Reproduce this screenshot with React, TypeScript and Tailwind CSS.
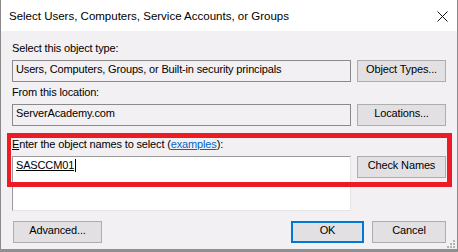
import React from "react";

function Btn({ label, className = "" }: { label: React.ReactNode; className?: string }) {
  return (
    <div
      className={
        "h-[22px] flex justify-center items-start pt-[2px] bg-[#e3e0e3] border border-[#adadad] text-[11px] leading-[13px] tracking-[-0.15px] " +
        className
      }
    >
      {label}
    </div>
  );
}

export default function App() {
  return (
    <div className="w-[458px] h-[252px] bg-[#8f8f8f] font-['Liberation_Sans',Arial,sans-serif] text-black">
      <div className="relative w-[458px] h-[249px] border-x border-[#8a8a8a] bg-[#f3f0f3] flex flex-col">
        {/* title bar */}
        <div className="h-[31px] bg-white flex items-center justify-between pl-[8px] pr-[9px]">
          <span className="text-[11.5px] leading-[14px]">
            Select Users, Computers, Service Accounts, or Groups
          </span>
          <svg width="11" height="11" viewBox="0 0 11 11" className="mt-[1px]">
            <path d="M0.5 0.5 L10.5 10.5 M10.5 0.5 L0.5 10.5" stroke="#111" strokeWidth="1" />
          </svg>
        </div>

        {/* body */}
        <div className="flex flex-col pl-[11px] pr-[11px] text-[11px] leading-[13px] tracking-[-0.15px]">
          <div className="mt-[11px] h-[13px]">Select this object type:</div>
          <div className="mt-[5px] flex gap-[6px]">
            <div className="w-[339px] h-[22px] border border-[#8a8a8a] pl-[3px] pt-[2px]">
              Users, Computers, Groups, or Built-in security principals
            </div>
            <Btn label="Object Types..." className="w-[89px]" />
          </div>

          <div className="mt-[4px] h-[13px]">From this location:</div>
          <div className="mt-[5px] flex gap-[6px]">
            <div className="w-[339px] h-[22px] border border-[#8a8a8a] pl-[3px] pt-[2px]">
              ServerAcademy.com
            </div>
            <Btn label="Locations..." className="w-[89px]" />
          </div>

          <div className="mt-[12px] h-[13px]">
            <span className="underline underline-offset-[1px]">E</span>nter the object names to select (
            <span className="text-[#0066cc] underline underline-offset-[1px]">examples</span>):
          </div>
          <div className="mt-[5px] flex gap-[6px] items-start">
            <div className="w-[339px] h-[55px] bg-white border border-t-[#9a9a9a] border-l-[#9a9a9a] border-r-[#e6e3e6] border-b-[#e6e3e6] pl-[3px] pt-[2px]">
              <span className="inline-flex items-end">
                <span className="underline underline-offset-[1px]">SASCCM01</span>
                <span className="inline-block w-px h-[13px] bg-black ml-[1px]" />
              </span>
            </div>
            <Btn label="Check Names" className="w-[89px]" />
          </div>

          <div className="mt-[10px] flex items-start">
            <Btn label="Advanced..." className="w-[89px] ml-[1px]" />
            <div className="flex-1" />
            <div className="w-[73px] h-[22px] border-2 border-[#0078d7] bg-[#e3e0e3] flex justify-center items-start pt-[1px]">
              OK
            </div>
            <Btn label="Cancel" className="w-[74px] ml-[8px]" />
          </div>
        </div>

        {/* red annotation rectangle */}
        <div className="absolute left-[6px] top-[133px] w-[445px] h-[54px] border-[5px] border-l-[4px] border-[#ed1c24] pointer-events-none" />

        {/* resize grip */}
        <svg width="9" height="9" viewBox="0 0 9 9" className="absolute right-[1px] bottom-[0px]">
          <rect x="6" y="0" width="2" height="2" fill="#b5b5b5" />
          <rect x="3" y="3" width="2" height="2" fill="#b5b5b5" />
          <rect x="6" y="3" width="2" height="2" fill="#b5b5b5" />
          <rect x="0" y="6" width="2" height="2" fill="#b5b5b5" />
          <rect x="3" y="6" width="2" height="2" fill="#b5b5b5" />
          <rect x="6" y="6" width="2" height="2" fill="#b5b5b5" />
        </svg>
      </div>
    </div>
  );
}
